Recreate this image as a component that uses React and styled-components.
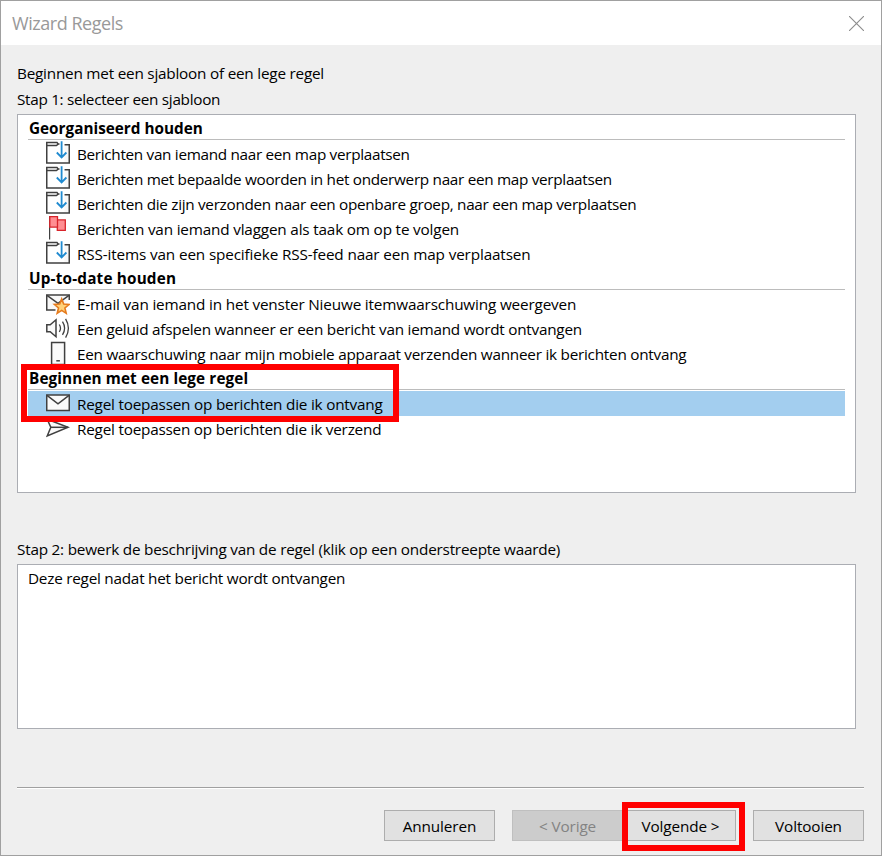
import React from "react";
import styled, { createGlobalStyle, css } from "styled-components";

const GlobalStyle = createGlobalStyle`
* {
  box-sizing: border-box;
}
body {
  margin: 0;
  background: #efefef;
}
`

const Window = styled.div`
position: relative;
display: flex;
flex-direction: column;
width: 882px;
height: 856px;
border: 1px solid #a0a0a0;
background: #efefef;
color: #000;
font-family: "Open Sans", "Noto Sans", sans-serif;
font-size: 15.3px;
line-height: 26px;
white-space: nowrap;
`

const TitleBar = styled.div`
display: flex;
justify-content: space-between;
align-items: center;
flex: none;
height: 44px;
padding: 0 17px 0 11px;
background: #fff;
color: #999;
font-size: 18px;
`

const Title = styled.span`
letter-spacing: -0.46px;
`

const Text = styled.span`
letter-spacing: ${props => props.$spacing || 0}px;
`

const Body = styled.div`
display: flex;
flex-direction: column;
padding: 15px 17px 0 16px;
`

const Label = styled.div`
height: 26px;
`

const Panel = styled.div`
width: 839px;
height: ${props => props.$height}px;
border: 1px solid #abadb3;
background: #fff;
padding: 0 10px;
`

const TemplatePanel = styled(Panel)`
margin: 2px 0 43px;
padding-top: 1px;
`

const DescriptionPanel = styled(Panel)`
margin-top: 2px;
`

const GroupHeader = styled.div`
height: 25px;
padding-left: 1px;
border-bottom: 1px solid #fff;
box-shadow: inset 0 -1px 0 #bcbcbc;
font-weight: 700;
line-height: 24px;
`

const Row = styled.div`
display: flex;
height: 25px;
padding-left: 18px;
gap: 7px;
line-height: 26px;
${props => props.$selected && css`
  background: #a3ceef;
`}
`

const Icon = styled.svg`
flex: none;
width: 24px;
height: 25px;
fill: none;
stroke: #404040;
stroke-width: 1.5;
`

const Divider = styled.div`
height: 2px;
margin: 58px 0 21px;
border-top: 1px solid #a0a0a0;
border-bottom: 1px solid #fff;
`

const Buttons = styled.div`
display: flex;
justify-content: flex-end;
`

const Button = styled.button`
width: 111px;
height: 31px;
margin-left: ${props => props.$gap}px;
padding: 1px 0 0;
border: 1px solid #adadad;
background: #e1e1e1;
color: #000;
font: inherit;
letter-spacing: -0.12px;
&:disabled {
  border-color: #bfbfbf;
  background: #ccc;
  color: #838383;
}
`

const Highlight = styled.div`
position: absolute;
left: ${props => props.$x - 1}px;
top: ${props => props.$y - 1}px;
width: ${props => props.$w}px;
height: ${props => props.$h}px;
border: 6px solid #f00;
pointer-events: none;
`

function FolderIcon() {
    return (
        <Icon viewBox="0 0 24 25">
            <path d="M.75 1.5V22h22.5V3.7H18.5V22H.75z" fill="#f8f8f8" stroke="none" />
            <path d="M.75 4.6V22h22.5V3.7h-4.7M.75 4.6V1.5H11l1.2 1.6-1.8 1.5H.75M12 3.1h1.5" />
            <path d="M15.6.3v16M10.8 11.5l4.8 4.9 4.8-4.9" stroke="#1f8ad0" strokeWidth="1.8" />
        </Icon>
    )
}

function FlagIcon() {
    return (
        <Icon viewBox="0 0 24 25">
            <path d="M3.6 0v23.5" strokeWidth="1.2" />
            <path d="M11.3 3.9h8v10.4h-8z" fill="#ff8e92" stroke="#d8232a" strokeWidth="1.3" />
            <path d="M3.8.7h7.7v10.4H3.8z" fill="#ff8e92" stroke="#d8232a" strokeWidth="1.3" />
        </Icon>
    )
}

function MailStarIcon() {
    return (
        <Icon viewBox="0 0 24 25">
            <path d="M9.5 19H.75V4h22.5v5" fill="#f8f8f8" />
            <path d="M1 4.3l11 8L23 4.3" />
            <path
                d="M15.7 8l2 5.1 5.3.4-4.1 3.5 1.3 5.3-4.5-2.9-4.5 2.9 1.3-5.3-4.1-3.5 5.3-.4z"
                fill="#ffd27a" stroke="#e57a1c" strokeWidth="1.6"
            />
        </Icon>
    )
}

function SoundIcon() {
    return (
        <Icon viewBox="0 0 24 25">
            <path d="M.8 8.7h3.4L10 3.8v16.9l-5.8-4.9H.8z" fill="#fafafa" />
            <path d="M13.3 8.5q2.4 3.7 0 7.4M16.5 5.6q4.2 6.6 0 13.2M19.6 2.8q5.6 9.4 0 18.8" strokeWidth="1.3" />
        </Icon>
    )
}

function PhoneIcon() {
    return (
        <Icon viewBox="0 0 24 25">
            <path d="M5.6 1.5h13v22h-13z" fill="#fafafa" />
            <path d="M10.3 19.8h3.6" />
        </Icon>
    )
}

function MailIcon() {
    return (
        <Icon viewBox="0 0 24 25">
            <path d="M.75 4h22.5v15.5H.75z" fill="#fafafa" />
            <path d="M1 4.3l11 8.6 11-8.6" />
        </Icon>
    )
}

function SendIcon() {
    return (
        <Icon viewBox="0 0 24 25">
            <path d="M1.2 3.3L22 11.3 1.2 20l3.6-8.7z" fill="#fafafa" />
            <path d="M4.8 11.3H22" />
        </Icon>
    )
}

const groups = [
    {
        title: "Georganiseerd houden",
        spacing: 0,
        rows: [
            { icon: FolderIcon, text: "Berichten van iemand naar een map verplaatsen", spacing: -0.31 },
            { icon: FolderIcon, text: "Berichten met bepaalde woorden in het onderwerp naar een map verplaatsen", spacing: -0.305 },
            { icon: FolderIcon, text: "Berichten die zijn verzonden naar een openbare groep, naar een map verplaatsen", spacing: -0.3 },
            { icon: FlagIcon, text: "Berichten van iemand vlaggen als taak om op te volgen", spacing: -0.18 },
            { icon: FolderIcon, text: "RSS-items van een specifieke RSS-feed naar een map verplaatsen", spacing: -0.145 }
        ]
    },
    {
        title: "Up-to-date houden",
        spacing: 0.18,
        rows: [
            { icon: MailStarIcon, text: "E-mail van iemand in het venster Nieuwe itemwaarschuwing weergeven", spacing: -0.17 },
            { icon: SoundIcon, text: "Een geluid afspelen wanneer er een bericht van iemand wordt ontvangen", spacing: -0.245 },
            { icon: PhoneIcon, text: "Een waarschuwing naar mijn mobiele apparaat verzenden wanneer ik berichten ontvang", spacing: -0.245 }
        ]
    },
    {
        title: "Beginnen met een lege regel",
        spacing: 0.11,
        rows: [
            { icon: MailIcon, text: "Regel toepassen op berichten die ik ontvang", spacing: -0.21, selected: true },
            { icon: SendIcon, text: "Regel toepassen op berichten die ik verzend", spacing: -0.22 }
        ]
    }
]

export default function App() {
    return (
        <Window>
            <GlobalStyle />
            <TitleBar>
                <Title>Wizard Regels</Title>
                <svg width="15" height="15" viewBox="0 0 15 15" stroke="#8c8c8c" strokeWidth="1.1">
                    <path d="M0 0l15 15M15 0L0 15" />
                </svg>
            </TitleBar>
            <Body>
                <Label><Text $spacing={-0.22}>Beginnen met een sjabloon of een lege regel</Text></Label>
                <Label><Text $spacing={-0.3}>Stap 1: selecteer een sjabloon</Text></Label>
                <TemplatePanel $height={379}>
                    {groups.map(group => (
                        <div key={group.title}>
                            <GroupHeader><Text $spacing={group.spacing}>{group.title}</Text></GroupHeader>
                            {group.rows.map(({ icon: RowIcon, text, spacing, selected }) => (
                                <Row key={text} $selected={selected}>
                                    <RowIcon />
                                    <Text $spacing={spacing}>{text}</Text>
                                </Row>
                            ))}
                        </div>
                    ))}
                </TemplatePanel>
                <Label><Text $spacing={-0.22}>Stap 2: bewerk de beschrijving van de regel (klik op een onderstreepte waarde)</Text></Label>
                <DescriptionPanel $height={165}>
                    <Text $spacing={-0.24}>Deze regel nadat het bericht wordt ontvangen</Text>
                </DescriptionPanel>
                <Divider />
                <Buttons>
                    <Button>Annuleren</Button>
                    <Button $gap={17} disabled>&lt; Vorige</Button>
                    <Button $gap={2}>Volgende &gt;</Button>
                    <Button $gap={17}>Voltooien</Button>
                </Buttons>
            </Body>
            <Highlight $x={21} $y={364} $w={378} $h={58} />
            <Highlight $x={622} $y={802} $w={123} $h={49} />
        </Window>
    )
}
